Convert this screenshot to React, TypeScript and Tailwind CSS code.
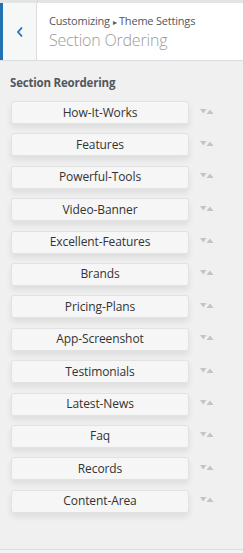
import React from 'react';

const sections = [
  'How-It-Works',
  'Features',
  'Powerful-Tools',
  'Video-Banner',
  'Excellent-Features',
  'Brands',
  'Pricing-Plans',
  'App-Screenshot',
  'Testimonials',
  'Latest-News',
  'Faq',
  'Records',
  'Content-Area',
];

const Arrows = () => (
  <svg width="14" height="7" viewBox="0 0 14 7" className="shrink-0 -mt-[3px]">
    <path d="M0 1 L6.5 1 L3.25 5.5 Z" fill="#c4c4c4" />
    <path d="M6.5 6 L13.5 6 L10 1.5 Z" fill="#c4c4c4" />
  </svg>
);

export default function App() {
  return (
    <div
      className="w-[243px] h-[553px] bg-[#f0f0f1] flex flex-col overflow-hidden"
      style={{ fontFamily: '"Open Sans", "Noto Sans", sans-serif' }}
    >
      <div className="h-[3px] bg-[#e4e4e4] flex">
        <div className="w-[37px]" />
        <div className="w-px bg-[#d5d5d5]" />
      </div>
      <div className="h-[58px] flex bg-white border-b border-[#dcdcde]">
        <div className="w-[3px] bg-[#2271b1]" />
        <button className="w-[34px] bg-[#f6f7f7] border-r border-[#dcdcde] flex items-center justify-center text-[#2271b1]">
          <svg width="8" height="12" viewBox="0 0 8 12">
            <path d="M6 1.5 L2 6 L6 10.5" fill="none" stroke="#2271b1" strokeWidth="1.8" />
          </svg>
        </button>
        <div className="flex flex-col justify-center pl-[12px] pt-[1px]">
          <div className="text-[11px] leading-[14px] text-[#50575e] tracking-[-0.2px]">
            Customizing <span className="text-[8px]">▸</span> Theme Settings
          </div>
          <div className="text-[16px] leading-[22px] text-[#9a9a9a] font-light tracking-[-0.2px]">
            Section Ordering
          </div>
        </div>
      </div>
      <div className="flex-1 flex flex-col">
        <div className="pl-[10px] pt-[14px] text-[11.5px] font-bold text-[#50575e] leading-[16px] tracking-[-0.2px]">
          Section Reordering
        </div>
        <div className="flex flex-col gap-[9.4px] pt-[10px] pl-[11px]">
          {sections.map((s) => (
            <div key={s} className="flex items-center gap-[11px]">
              <div className="w-[178px] h-[23px] bg-[#f6f6f6] border border-[#e2e2e2] rounded-[3px] shadow-[0_4px_6px_rgba(0,0,0,0.08)] flex items-center justify-center text-[12px] text-[#333] tracking-[-0.1px]">
                {s}
              </div>
              <Arrows />
            </div>
          ))}
        </div>
      </div>
      <div className="h-[4px] border-t border-[#dcdcde] bg-[#f3f3f3]" />
    </div>
  );
}
